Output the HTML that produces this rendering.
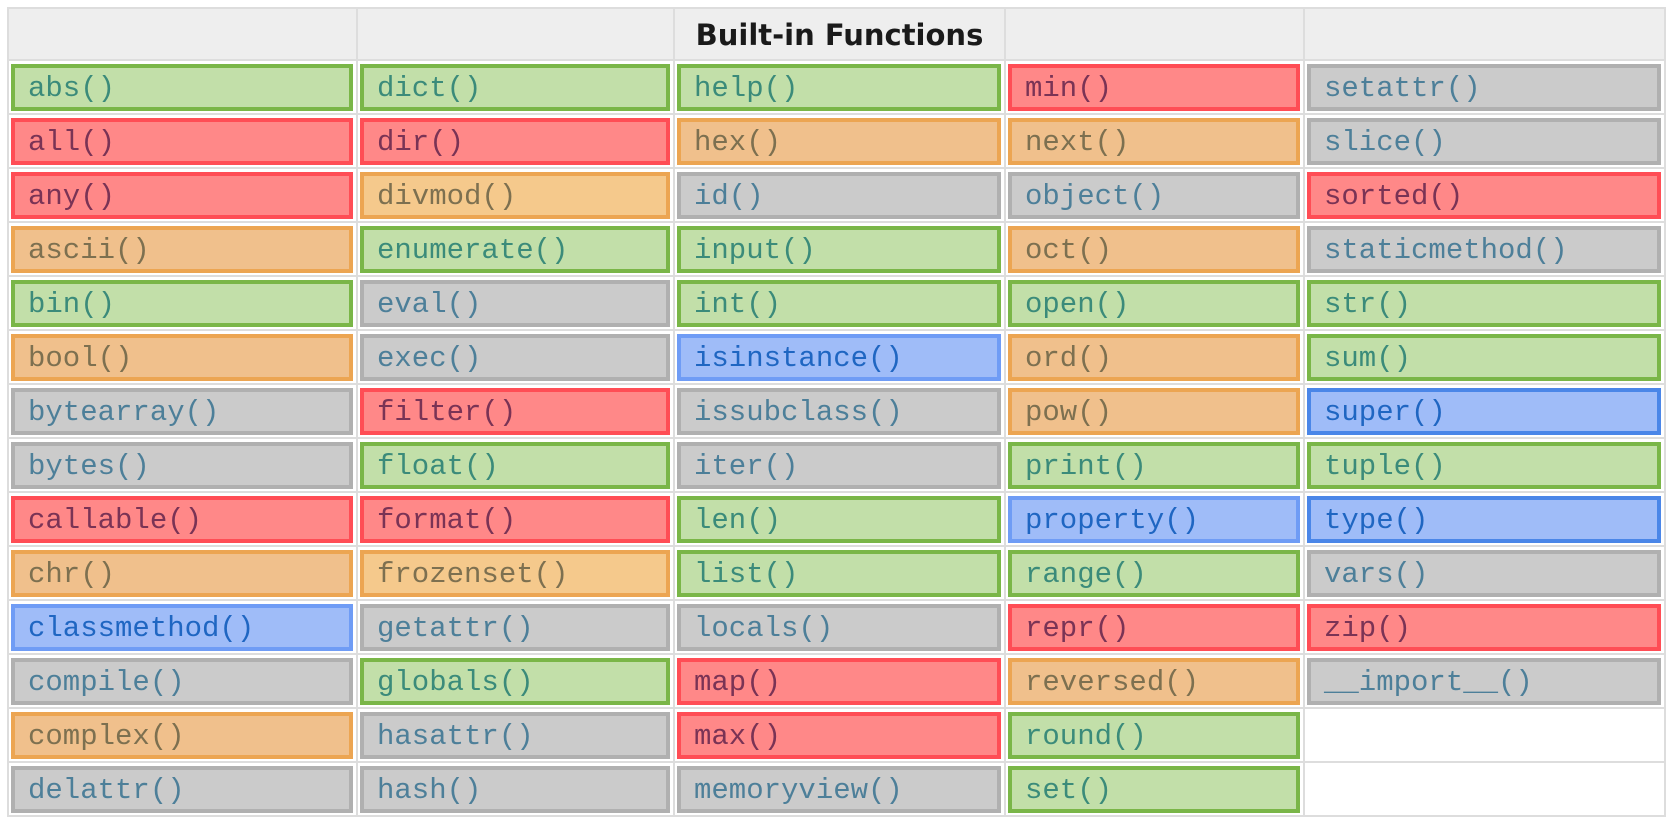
<!DOCTYPE html>
<html><head><meta charset="utf-8"><style>
html,body{margin:0;padding:0;background:#fff;width:1672px;height:822px;overflow:hidden}
.t{position:absolute;left:7px;top:7px;width:1659px;height:810px;background:#ddd;display:grid;grid-template-columns:347px 315px 329px 297px 359px;grid-template-rows:50px repeat(14,52px);gap:2px;padding:2px;box-sizing:border-box}
.c{background:#fff;box-sizing:border-box;padding:3px 3px 2px 2px}
.h{background:#eee}
.hd{background:#eee;font-family:"DejaVu Sans","Liberation Sans",sans-serif;font-weight:bold;font-size:29px;color:#1a1a1a;text-align:center;line-height:52px;white-space:nowrap}
.b{box-sizing:border-box;height:47px;border:4px solid;font-family:"Liberation Mono",monospace;font-size:29px;line-height:42px;padding-left:13px;white-space:nowrap;overflow:hidden}
.g{background:#c2dfa9;border-color:#7ab648;color:#3b8b7a}
.r{background:#ff8888;border-color:#ff4d55;color:#7a3355}
.o{background:#f0c08c;border-color:#eca552;color:#7d7050}
.p{background:#f5c98c;border-color:#eca552;color:#7d7050}
.y{background:#cbcbcb;border-color:#b0b0b0;color:#4d7f99}
.u{background:#9fbcf8;border-color:#6f9cf5;color:#1f66c2}
.v{background:#9fbcf8;border-color:#4a86e8;color:#1f66c2}
</style></head><body>
<div class="t">
<div class="h"></div><div class="h"></div><div class="hd">Built-in Functions</div><div class="h"></div><div class="h"></div>

<div class="c"><div class="b g">abs()</div></div><div class="c"><div class="b g">dict()</div></div><div class="c"><div class="b g">help()</div></div><div class="c"><div class="b r">min()</div></div><div class="c"><div class="b y">setattr()</div></div>
<div class="c"><div class="b r">all()</div></div><div class="c"><div class="b r">dir()</div></div><div class="c"><div class="b o">hex()</div></div><div class="c"><div class="b o">next()</div></div><div class="c"><div class="b y">slice()</div></div>
<div class="c"><div class="b r">any()</div></div><div class="c"><div class="b p">divmod()</div></div><div class="c"><div class="b y">id()</div></div><div class="c"><div class="b y">object()</div></div><div class="c"><div class="b r">sorted()</div></div>
<div class="c"><div class="b o">ascii()</div></div><div class="c"><div class="b g">enumerate()</div></div><div class="c"><div class="b g">input()</div></div><div class="c"><div class="b o">oct()</div></div><div class="c"><div class="b y">staticmethod()</div></div>
<div class="c"><div class="b g">bin()</div></div><div class="c"><div class="b y">eval()</div></div><div class="c"><div class="b g">int()</div></div><div class="c"><div class="b g">open()</div></div><div class="c"><div class="b g">str()</div></div>
<div class="c"><div class="b o">bool()</div></div><div class="c"><div class="b y">exec()</div></div><div class="c"><div class="b u">isinstance()</div></div><div class="c"><div class="b o">ord()</div></div><div class="c"><div class="b g">sum()</div></div>
<div class="c"><div class="b y">bytearray()</div></div><div class="c"><div class="b r">filter()</div></div><div class="c"><div class="b y">issubclass()</div></div><div class="c"><div class="b o">pow()</div></div><div class="c"><div class="b v">super()</div></div>
<div class="c"><div class="b y">bytes()</div></div><div class="c"><div class="b g">float()</div></div><div class="c"><div class="b y">iter()</div></div><div class="c"><div class="b g">print()</div></div><div class="c"><div class="b g">tuple()</div></div>
<div class="c"><div class="b r">callable()</div></div><div class="c"><div class="b r">format()</div></div><div class="c"><div class="b g">len()</div></div><div class="c"><div class="b u">property()</div></div><div class="c"><div class="b v">type()</div></div>
<div class="c"><div class="b o">chr()</div></div><div class="c"><div class="b p">frozenset()</div></div><div class="c"><div class="b g">list()</div></div><div class="c"><div class="b g">range()</div></div><div class="c"><div class="b y">vars()</div></div>
<div class="c"><div class="b u">classmethod()</div></div><div class="c"><div class="b y">getattr()</div></div><div class="c"><div class="b y">locals()</div></div><div class="c"><div class="b r">repr()</div></div><div class="c"><div class="b r">zip()</div></div>
<div class="c"><div class="b y">compile()</div></div><div class="c"><div class="b g">globals()</div></div><div class="c"><div class="b r">map()</div></div><div class="c"><div class="b o">reversed()</div></div><div class="c"><div class="b y">__import__()</div></div>
<div class="c"><div class="b o">complex()</div></div><div class="c"><div class="b y">hasattr()</div></div><div class="c"><div class="b r">max()</div></div><div class="c"><div class="b g">round()</div></div><div class="c"></div>
<div class="c"><div class="b y">delattr()</div></div><div class="c"><div class="b y">hash()</div></div><div class="c"><div class="b y">memoryview()</div></div><div class="c"><div class="b g">set()</div></div><div class="c"></div>
</div>
</body></html>
